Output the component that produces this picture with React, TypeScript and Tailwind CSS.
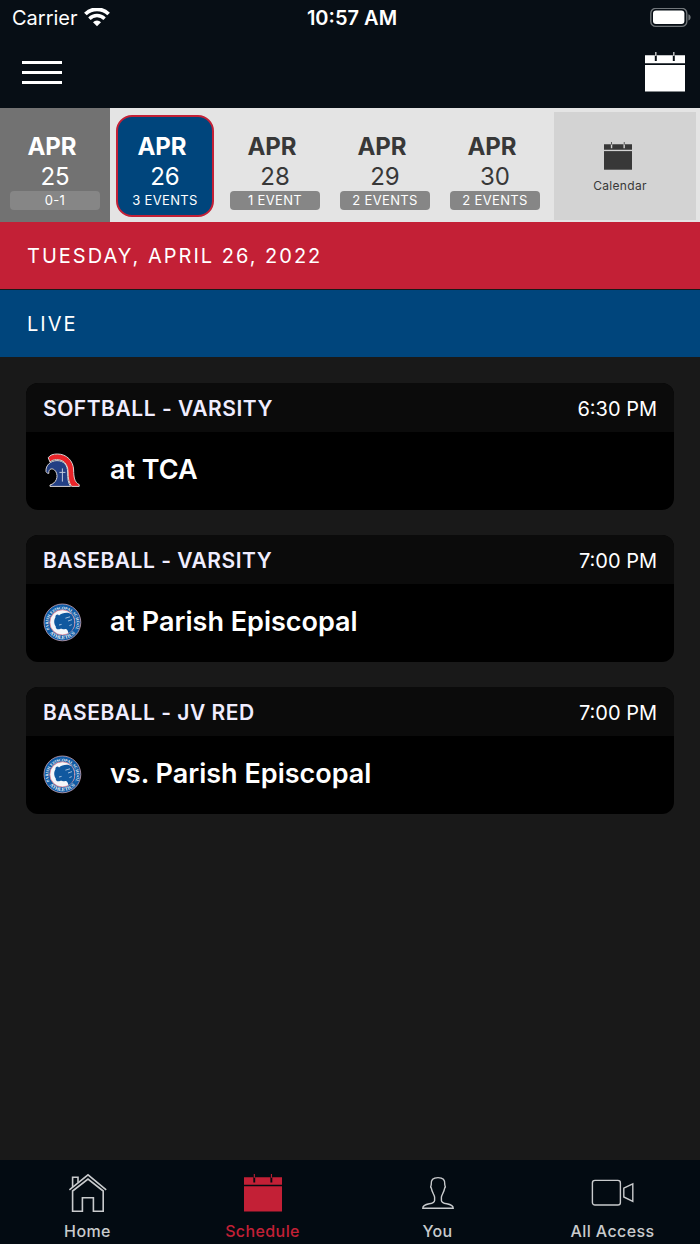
import { useState } from "react";

interface DayItem {
  month: string;
  day: string;
  label: string;
  past?: boolean;
}

interface EventItem {
  sport: string;
  time: string;
  title: string;
  logo: "trojan" | "panther";
}

const days: DayItem[] = [
  { month: "APR", day: "25", label: "0-1", past: true },
  { month: "APR", day: "26", label: "3 EVENTS" },
  { month: "APR", day: "28", label: "1 EVENT" },
  { month: "APR", day: "29", label: "2 EVENTS" },
  { month: "APR", day: "30", label: "2 EVENTS" },
];

const events: EventItem[] = [
  { sport: "SOFTBALL - VARSITY", time: "6:30 PM", title: "at TCA", logo: "trojan" },
  { sport: "BASEBALL - VARSITY", time: "7:00 PM", title: "at Parish Episcopal", logo: "panther" },
  { sport: "BASEBALL - JV RED", time: "7:00 PM", title: "vs. Parish Episcopal", logo: "panther" },
];

// icons ----------------------------------------------------
const CalendarIcon = ({ className }: { className: string }) => (
  <svg viewBox="0 0 40 40" className={className} fill="currentColor" aria-hidden="true">
    <path d="M0 3.3H9.8V9H11.8V3.3H27.8V9H29.8V3.3H40V11.2H0Z" />
    <path d="M0 13H40V39.6H0Z" />
    <path d="M10.3 0H11.4V4H10.3ZM28.3 0H29.4V4H28.3Z" />
  </svg>
);

const WifiIcon = () => (
  <svg viewBox="0 0 26 20" className="h-5 w-[26px]" fill="none" stroke="white" aria-hidden="true">
    <path d="M1.4 6A16.6 16.6 0 0 1 24.6 6" strokeWidth="3.8" />
    <path d="M5.4 10.7A10.8 10.8 0 0 1 20.6 10.7" strokeWidth="3.4" />
    <path d="M13 18.2L9 14.3A5.6 5.6 0 0 1 17 14.3Z" fill="white" stroke="none" />
  </svg>
);

const BatteryIcon = () => (
  <svg viewBox="0 0 42 20" className="h-5 w-[42px]" aria-hidden="true">
    <rect x="0.8" y="0.4" width="36" height="18" rx="5" fill="none" stroke="#71767a" strokeWidth="1.4" />
    <rect x="3" y="2.6" width="31.4" height="13.4" rx="3" fill="white" />
    <path d="M38.4 6.2C41.4 7.4 41.4 11.2 38.4 12.4Z" fill="#71767a" />
  </svg>
);

const HomeIcon = () => (
  <svg viewBox="0 0 40 40" className="size-10" fill="none" stroke="currentColor" strokeWidth="1.6" aria-hidden="true">
    <path d="M1.4 16.8L20 1.8L38.2 16.8" />
    <path d="M4.6 18V38.2H14.4V24.8H25.4V38.2H35.2V18L20 6Z" />
    <path d="M4.6 14V4.2H10V9.4" />
  </svg>
);

const UserIcon = () => (
  <svg viewBox="0 0 40 40" className="size-10" fill="none" stroke="currentColor" strokeWidth="1.4" aria-hidden="true">
    <path d="M16.6 24.2C16.4 21.8 13.8 18.8 13.4 15.4C12.4 13.8 12.8 12.4 13.2 11.8C12.8 6.8 15 4.6 20 4.6C25 4.6 27.2 6.8 26.8 11.8C27.2 12.4 27.6 13.8 26.6 15.4C26.2 18.8 23.6 21.8 23.4 24.2V27.4C23.4 32.4 35.2 29 35.2 35.2H4.8C4.8 29 16.6 32.4 16.6 27.4Z" />
  </svg>
);

const VideoIcon = () => (
  <svg viewBox="0 0 44 40" className="h-10 w-11" fill="none" stroke="currentColor" strokeWidth="1.4" aria-hidden="true">
    <rect x="1.4" y="7.4" width="28" height="24.6" rx="2.6" />
    <path d="M32.8 15.2L41.8 10.8V28.4L32.8 24Z" />
  </svg>
);

const TrojanLogo = () => (
  <svg viewBox="0 0 40 40" className="size-10" aria-hidden="true">
    <path d="M5.2 6.8C7 3.8 10.4 3 14.4 3C23.6 3 30.4 9.8 30.6 19C30.8 26 31.2 31 36.2 33.6V35.4H28.6C26 32 25 27 25 21C25 12.4 20 8.6 13.6 8.6C11 8.6 8.6 9.4 7 11Z" fill="#ea2429" stroke="#d9d4d4" strokeWidth="1" />
    <path d="M3 20.6C2.4 14 8 9.6 14 9.6C20.6 9.6 24.6 14 24.6 21C24.6 27.4 25 32 27.6 35.4H7V34C13 32.4 16 25.6 12.6 20.2C10 16.6 5.4 17 5.8 22.4C4.4 22.4 3.4 21.6 3 20.6Z" fill="#233f84" stroke="#d9d4d4" strokeWidth="1" />
    <path d="M19.4 17.4V30.6M16.4 21.4H22.4" stroke="#c3cbdd" strokeWidth="1" />
  </svg>
);

const PantherLogo = ({ id }: { id: string }) => (
  <svg viewBox="0 0 40 40" className="size-10" aria-hidden="true">
    <circle cx="19.4" cy="19.4" r="18.4" fill="#0f5ba5" stroke="#c9a3b4" strokeWidth="0.8" />
    <circle cx="19.4" cy="19.4" r="12.6" fill="#f4f6f9" stroke="#d97c8e" strokeWidth="0.8" />
    <path d="M12.4 14.6C12 11.6 15 10.6 16 12.4C19 10.2 25 8.4 28.8 11.6C31.4 15 32 20 30.8 24C29.6 27 27.4 29.4 25.4 30C24.6 27.4 24 25.6 21.6 26.2C19.6 26.8 19 25.2 17 26C14.6 27 12.4 25.6 12.8 23.4C11 21.6 10.6 17 12.4 14.6Z" fill="#10589f" />
    <path d="M22.4 15.2L27 13.8M25 18L29 16.6M26.4 22.6L28.8 21.6M16 22L18.6 21.4" stroke="#c4d6e8" strokeWidth="0.8" fill="none" />
    <path id={`${id}-top`} d="M6.6 26.6A14.2 14.2 0 1 1 32.2 26.6" fill="none" />
    <path id={`${id}-bottom`} d="M3.6 25.4A17 17 0 0 0 35.2 25.4" fill="none" />
    <g fill="#f2f6fa" fontFamily="Liberation Serif, serif" fontWeight="700">
      <text fontSize="4">
        <textPath href={`#${id}-top`} startOffset="50%" textAnchor="middle">PARISH EPISCOPAL SCHOOL</textPath>
      </text>
      <text fontSize="5">
        <textPath href={`#${id}-bottom`} startOffset="50%" textAnchor="middle">ATHLETICS</textPath>
      </text>
    </g>
  </svg>
);
//===========================================================

const tabs = [
  { name: "Home", icon: <HomeIcon /> },
  { name: "Schedule", icon: <CalendarIcon className="my-px size-[38px]" /> },
  { name: "You", icon: <UserIcon /> },
  { name: "All Access", icon: <VideoIcon /> },
];

const App = () => {
  const [selected, setSelected] = useState("26");
  const [tab, setTab] = useState("Schedule");

  // colors of one day in the strip
  const dayStyle = (item: DayItem) => {
    if (item.day === selected) return "text-white bg-[#00457c] border-[#c32036]";
    if (item.past) return "text-white border-transparent";
    return "text-[#383838] border-transparent";
  };

  return (
    <div className="flex min-h-screen flex-col bg-[#191919] font-[Inter,sans-serif] text-white">
      <header className="bg-[#070e15]">
        <div className="grid h-9 grid-cols-3 items-center pl-3 pr-2">
          <div className="flex items-center gap-[6px] text-xl">
            Carrier
            <WifiIcon />
          </div>
          <p className="text-center text-xl font-semibold">10:57 AM</p>
          <div className="flex justify-end">
            <BatteryIcon />
          </div>
        </div>
        <div className="flex h-18 items-center justify-between pl-[22px] pr-[15px]">
          <button aria-label="Menu" className="flex w-10 flex-col gap-[7px]">
            <span className="h-[3px] bg-white" />
            <span className="h-[3px] bg-white" />
            <span className="h-[3px] bg-white" />
          </button>
          <button aria-label="Open calendar">
            <CalendarIcon className="size-10" />
          </button>
        </div>
      </header>

      <div className="flex h-[114px] bg-[#e4e4e4]">
        {days.map((item) => (
          <div
            key={item.day}
            className={`w-[110px] shrink-0 px-[6px] pt-[7px] ${item.past ? "bg-[#727272]" : ""}`}
          >
            <button
              onClick={() => setSelected(item.day)}
              className={`flex h-[102px] w-full flex-col items-center rounded-2xl border-2 px-[2px] pt-[14px] ${dayStyle(item)}`}
            >
              <span className="pr-[6px] text-2xl leading-8 font-bold">{item.month}</span>
              <span className="text-2xl leading-7">{item.day}</span>
              <span
                className={`h-[19px] w-full rounded text-[13px] leading-[19px] tracking-wide text-white ${item.day === selected ? "" : "bg-[#868686]"}`}
              >
                {item.label}
              </span>
            </button>
          </div>
        ))}
        <button className="mx-1 mt-1 mb-[2px] flex grow flex-col items-center justify-center gap-2 bg-[#d3d3d3] pt-1 pr-[14px] text-[#383838]">
          <CalendarIcon className="size-7" />
          <span className="pl-1 text-xs tracking-wide">Calendar</span>
        </button>
      </div>

      <h1 className="border-b border-[#191919] bg-[#c32036] px-[27px] pt-[2px] text-xl leading-[65px] tracking-widest">
        TUESDAY, APRIL 26, 2022
      </h1>
      <h2 className="bg-[#00457c] px-[27px] pt-[2px] text-xl leading-[65px] tracking-widest">LIVE</h2>

      <main className="flex grow flex-col gap-[25px] px-[26px] py-[26px]">
        {events.map((event, i) => (
          <a key={i} href="#event" className="block overflow-hidden rounded-xl bg-black">
            <div className="flex h-[49px] items-center justify-between bg-[#0b0b0b] px-[17px] pt-[2px]">
              <h3 className="text-[21px] font-semibold tracking-wide text-[#f0edff]">{event.sport}</h3>
              <span className="text-xl">{event.time}</span>
            </div>
            <div className="flex h-[78px] items-center gap-[27px] px-[17px]">
              {event.logo === "trojan" ? <TrojanLogo /> : <PantherLogo id={`logo${i}`} />}
              <p className="pb-[2px] text-[27px] font-semibold">{event.title}</p>
            </div>
          </a>
        ))}
      </main>

      <nav className="grid h-[84px] grid-cols-4 bg-[#030b12]">
        {tabs.map((item) => (
          <button
            key={item.name}
            onClick={() => setTab(item.name)}
            className={`flex flex-col items-center gap-[6px] pt-[13px] ${tab === item.name ? "text-[#c32036]" : "text-[#c9cbcd]"}`}
          >
            {item.icon}
            <span className="text-base leading-6 font-medium tracking-wide">{item.name}</span>
          </button>
        ))}
      </nav>
    </div>
  );
};

export default App;
